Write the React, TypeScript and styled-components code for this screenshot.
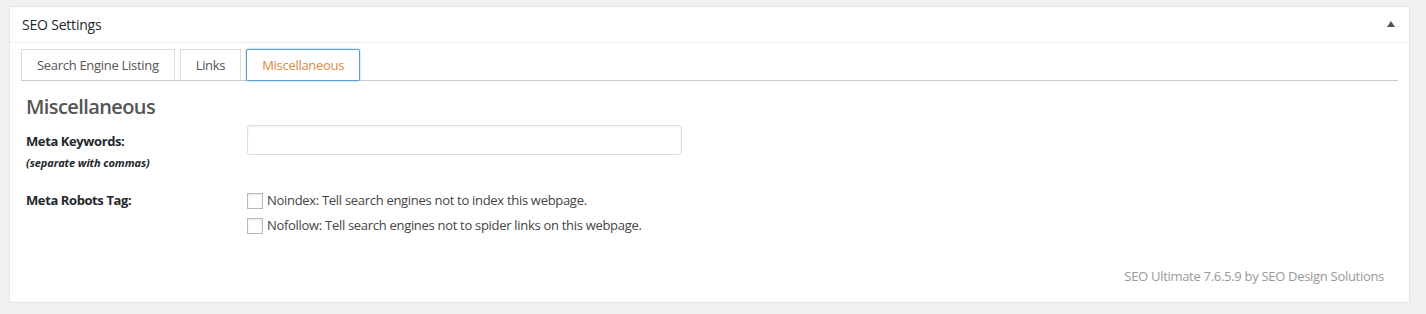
import React from "react";
import styled, { createGlobalStyle } from "styled-components";

const GlobalStyle = createGlobalStyle`
  html, body {
    margin: 0;
    padding: 0;
    background: #f1f1f1;
  }
  body {
    font-family: "Open Sans", "Noto Sans", "Liberation Sans", sans-serif;
    font-size: 13px;
    color: #444;
  }
  * { box-sizing: border-box; }
`;

const Panel = styled.div`
  margin: 6px 16px 0 9px;
  height: 297px;
  background: #fff;
  border: 1px solid #e5e5e5;
  box-shadow: 0 1px 1px rgba(0, 0, 0, 0.04);
  display: flex;
  flex-direction: column;
`;

const Header = styled.div`
  height: 36px;
  border-bottom: 1px solid #eee;
  display: flex;
  align-items: center;
  justify-content: space-between;
  padding: 0 14px 0 12px;
`;

const Title = styled.h2`
  margin: 0;
  font-size: 14px;
  font-weight: 400;
  color: #23282d;
  letter-spacing: -0.2px;
`;

const Toggle = styled.span`
  width: 0;
  height: 0;
  border-left: 4px solid transparent;
  border-right: 4px solid transparent;
  border-bottom: 6px solid #555;
  margin-top: -1px;
`;

const Body = styled.div`
  padding: 6px 11px 0 11px;
  display: flex;
  flex-direction: column;
`;

const TabStrip = styled.div`
  display: flex;
  gap: 5px;
  height: 32px;
  border-bottom: 1px solid #ccc;
`;

const Tab = styled.button<{ $active?: boolean }>`
  height: ${(p) => (p.$active ? "32px" : "31px")};
  padding: 0 15px;
  background: #fff;
  font-family: inherit;
  font-size: 13px;
  letter-spacing: -0.3px;
  color: ${(p) => (p.$active ? "#dc8a3d" : "#555")};
  border: 1px solid ${(p) => (p.$active ? "#5b9dd9" : "#ddd")};
  border-bottom: ${(p) => (p.$active ? "1px solid #5b9dd9" : "none")};
  border-radius: ${(p) => (p.$active ? "2px" : "0")};
  box-shadow: ${(p) => (p.$active ? "0 0 2px rgba(30, 140, 190, 0.6)" : "none")};
  cursor: pointer;
  line-height: 30px;
`;

const Content = styled.div`
  padding: 0 5px;
`;

const Heading = styled.h3`
  margin: 13px 0 5px;
  font-size: 20px;
  line-height: 26px;
  font-weight: 600;
  color: #555;
  letter-spacing: -0.6px;
`;

const Row = styled.div<{ $gap?: number }>`
  display: grid;
  grid-template-columns: 221px 1fr;
  margin-top: ${(p) => p.$gap ?? 0}px;
`;

const LabelCell = styled.div<{ $pad: number }>`
  padding-top: ${(p) => p.$pad}px;
`;

const Label = styled.div`
  font-weight: 700;
  font-size: 13px;
  line-height: 18px;
  color: #23282d;
  letter-spacing: -0.4px;
`;

const Hint = styled.div`
  margin-top: 6px;
  font-size: 11px;
  line-height: 14px;
  font-style: italic;
  font-weight: 700;
  color: #23282d;
  letter-spacing: -0.1px;
`;

const TextInput = styled.input`
  width: 435px;
  height: 30px;
  border: 1px solid #ddd;
  border-radius: 3px;
  box-shadow: inset 0 1px 2px rgba(0, 0, 0, 0.07);
  background: #fff;
  font-family: inherit;
  font-size: 13px;
  padding: 3px 5px;
  outline: none;
`;

const CheckList = styled.div`
  display: flex;
  flex-direction: column;
  gap: 7px;
`;

const CheckLine = styled.label`
  display: flex;
  align-items: center;
  gap: 4px;
  font-size: 13px;
  line-height: 16px;
  color: #444;
  letter-spacing: -0.3px;
`;

const Box = styled.input`
  appearance: none;
  -webkit-appearance: none;
  width: 16px;
  height: 16px;
  margin: 2px 0 0 0;
  border: 1px solid #b4b9be;
  background: #fff;
  box-shadow: inset 0 1px 2px rgba(0, 0, 0, 0.1);
  flex: none;
`;

const Footer = styled.div`
  margin-top: auto;
  padding: 0 25px 17px 0;
  text-align: right;
  font-size: 13px;
  line-height: 18px;
  color: #999;
  letter-spacing: -0.3px;
`;

export default function App() {
  return (
    <>
      <GlobalStyle />
      <Panel>
        <Header>
          <Title>SEO Settings</Title>
          <Toggle />
        </Header>
        <Body>
          <TabStrip>
            <Tab>Search Engine Listing</Tab>
            <Tab>Links</Tab>
            <Tab $active>Miscellaneous</Tab>
          </TabStrip>
          <Content>
            <Heading>Miscellaneous</Heading>
            <Row>
              <LabelCell $pad={7}>
                <Label>Meta Keywords:</Label>
                <Hint>(separate with commas)</Hint>
              </LabelCell>
              <div>
                <TextInput type="text" />
              </div>
            </Row>
            <Row $gap={21}>
              <LabelCell $pad={0}>
                <Label>Meta Robots Tag:</Label>
              </LabelCell>
              <CheckList>
                <CheckLine>
                  <Box type="checkbox" />
                  Noindex: Tell search engines not to index this webpage.
                </CheckLine>
                <CheckLine>
                  <Box type="checkbox" />
                  Nofollow: Tell search engines not to spider links on this webpage.
                </CheckLine>
              </CheckList>
            </Row>
          </Content>
        </Body>
        <Footer>SEO Ultimate 7.6.5.9 by SEO Design Solutions</Footer>
      </Panel>
    </>
  );
}
